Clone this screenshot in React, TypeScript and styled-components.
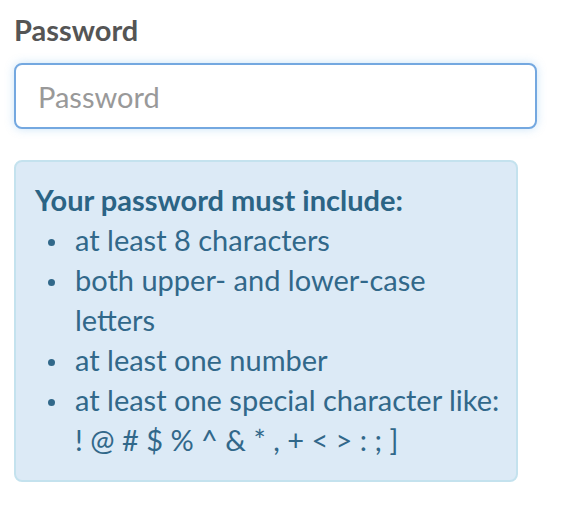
import React from 'react';
import styled, { createGlobalStyle } from 'styled-components';

const GlobalStyle = createGlobalStyle`
    * { box-sizing: border-box; }
    body {
        margin: 0;
        background: #ffffff;
        font-family: Lato, "Open Sans", sans-serif;
        font-size: 29px;
        line-height: 40px;
    }
`;

const StyledPage = styled.div`
    padding: 10px 0 0 14px;
`;

const StyledLabel = styled.label`
    color: #555555;
    display: block;
    font-weight: 700;
    margin-bottom: 13px;
`;

const StyledInput = styled.input`
    border: 2px solid #74a8e0;
    border-radius: 8px;
    box-shadow: 0 0 10px rgba(102, 175, 233, 0.35);
    color: #555555;
    display: block;
    font-family: inherit;
    font-size: 29px;
    height: 66px;
    outline: none;
    padding: 0 22px;
    width: 523px;

    &::placeholder {
        color: #999999;
    }
`;

const StyledAlert = styled.div`
    background: #dceaf6;
    border: 2px solid #c4e2ee;
    border-radius: 8px;
    color: #31688a;
    margin-top: 31px;
    padding: 18px 19px 20px 19px;
    width: 504px;
`;

const StyledHeading = styled.div`
    color: #2b6485;
    font-weight: 700;
`;

const StyledList = styled.ul`
    list-style: none;
    margin: 0;
    padding-left: 40px;
`;

const StyledItem = styled.li`
    position: relative;
    white-space: nowrap;

    &::before {
        background: currentColor;
        border-radius: 50%;
        content: '';
        height: 7px;
        left: -27px;
        position: absolute;
        top: 19px;
        width: 7px;
    }
`;

export default function App() {
    return <>
        <GlobalStyle />
        <StyledPage>
            <StyledLabel htmlFor="password">Password</StyledLabel>
            <StyledInput id="password" type="password" placeholder="Password" />
            <StyledAlert>
                <StyledHeading>Your password must include:</StyledHeading>
                <StyledList>
                    <StyledItem>at least 8 characters</StyledItem>
                    <StyledItem>both upper- and lower-case<br />letters</StyledItem>
                    <StyledItem>at least one number</StyledItem>
                    <StyledItem>at least one special character like:<br />! @ # $ % ^ &amp; * , + &lt; &gt; : ; ]</StyledItem>
                </StyledList>
            </StyledAlert>
        </StyledPage>
    </>;
}
